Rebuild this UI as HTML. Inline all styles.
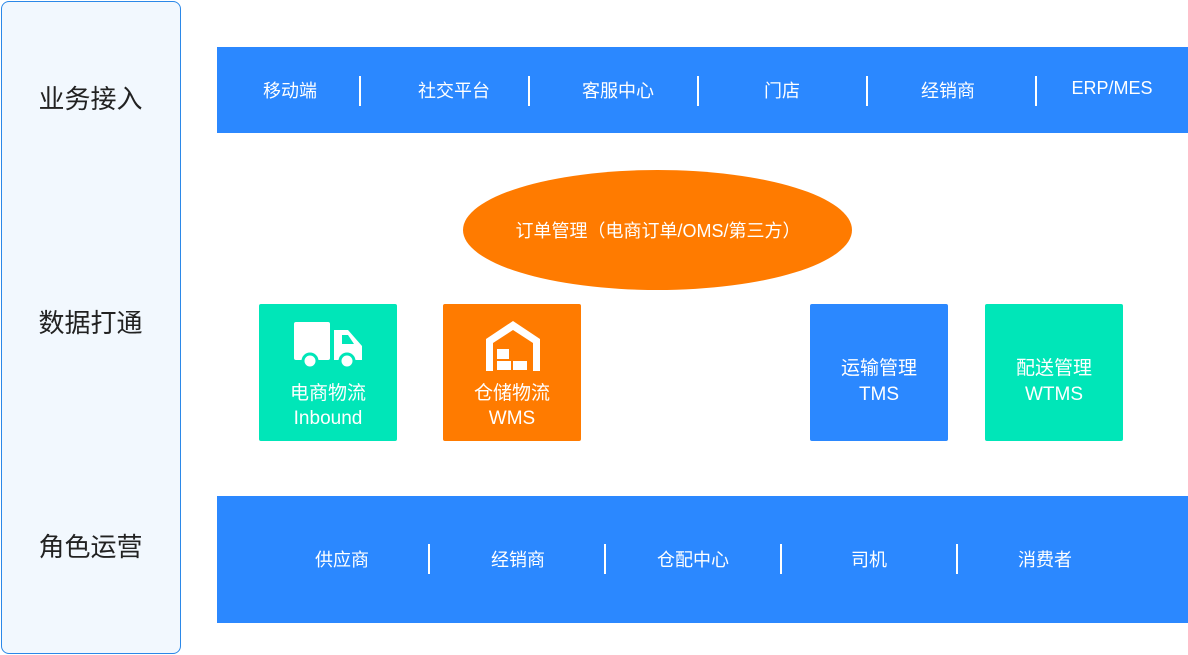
<!DOCTYPE html>
<html><head><meta charset="utf-8"><style>
body{margin:0;width:1188px;height:655px;background:#fff;position:relative;font-family:"Liberation Sans","Noto Sans CJK SC",sans-serif;overflow:hidden}
.a{position:absolute}
.left{left:1px;top:1px;width:178px;height:651px;border:1px solid #2b88e8;border-radius:8px;background:#f2f8fe}
.lab{position:absolute;left:0;width:181px;text-align:center;font-size:26px;color:#222}
.bar{background:#2b88ff;left:217px;width:971px}
.t{position:absolute;color:#fff;font-size:18px;text-align:center;transform:translateX(-50%);white-space:nowrap}
.sep{position:absolute;width:2px;background:#fff}
.box{position:absolute;width:138px;height:137px;top:304px;color:#fff;font-size:19px;text-align:center;border-radius:2px}
</style></head><body>
<div class="a left"></div>
<div class="lab" style="top:79px">业务接入</div>
<div class="lab" style="top:303px">数据打通</div>
<div class="lab" style="top:527px">角色运营</div>

<div class="a bar" style="top:47px;height:86px"></div>
<div class="t" style="left:290px;top:77px">移动端</div>
<div class="t" style="left:454px;top:77px">社交平台</div>
<div class="t" style="left:618px;top:77px">客服中心</div>
<div class="t" style="left:782px;top:77px">门店</div>
<div class="t" style="left:948px;top:77px">经销商</div>
<div class="t" style="left:1112px;top:78px">ERP/MES</div>
<div class="sep" style="left:359px;top:76px;height:30px"></div>
<div class="sep" style="left:528px;top:76px;height:30px"></div>
<div class="sep" style="left:697px;top:76px;height:30px"></div>
<div class="sep" style="left:866px;top:76px;height:30px"></div>
<div class="sep" style="left:1035px;top:76px;height:30px"></div>

<div class="a" style="left:463px;top:170px;width:389px;height:120px;border-radius:50%;background:#ff7b00"></div>
<div class="t" style="left:658px;top:217px;font-size:18px">订单管理（电商订单/OMS/第三方）</div>

<div class="box" style="left:259px;background:#00e6b8">
<svg class="a" style="left:35px;top:18px" width="68" height="48" viewBox="0 0 68 48"><rect x="0" y="0" width="36" height="38" rx="2" fill="#fff"/><path d="M40 8h14l14 16v14H40z" fill="#fff"/><path d="M48 13h6l6 9h-12z" fill="#00e6b8"/><circle cx="16" cy="39" r="7" fill="#fff" stroke="#00e6b8" stroke-width="3"/><circle cx="53" cy="39" r="7" fill="#fff" stroke="#00e6b8" stroke-width="3"/></svg>
<div class="a" style="left:0;width:138px;top:74px">电商物流</div>
<div class="a" style="left:0;width:138px;top:104px">Inbound</div></div>

<div class="box" style="left:443px;background:#ff7b00">
<svg class="a" style="left:43px;top:17px" width="54" height="50" viewBox="0 0 54 50"><path d="M0 18L27 0L54 18V50H47V22L27 9L7 22V50H0z" fill="#fff"/><rect x="11" y="28" width="12" height="10" fill="#fff"/><rect x="11" y="40" width="14" height="9" fill="#fff"/><rect x="27" y="40" width="14" height="9" fill="#fff"/></svg>
<div class="a" style="left:0;width:138px;top:74px">仓储物流</div>
<div class="a" style="left:0;width:138px;top:104px">WMS</div></div>

<div class="box" style="left:810px;background:#2b88ff">
<div class="a" style="left:0;width:138px;top:49px">运输管理</div>
<div class="a" style="left:0;width:138px;top:80px">TMS</div></div>

<div class="box" style="left:985px;background:#00e6b8">
<div class="a" style="left:0;width:138px;top:49px">配送管理</div>
<div class="a" style="left:0;width:138px;top:80px">WTMS</div></div>

<div class="a bar" style="top:496px;height:127px"></div>
<div class="t" style="left:342px;top:546px">供应商</div>
<div class="t" style="left:518px;top:546px">经销商</div>
<div class="t" style="left:693px;top:546px">仓配中心</div>
<div class="t" style="left:869px;top:546px">司机</div>
<div class="t" style="left:1045px;top:546px">消费者</div>
<div class="sep" style="left:428px;top:544px;height:30px"></div>
<div class="sep" style="left:604px;top:544px;height:30px"></div>
<div class="sep" style="left:780px;top:544px;height:30px"></div>
<div class="sep" style="left:956px;top:544px;height:30px"></div>
</body></html>
